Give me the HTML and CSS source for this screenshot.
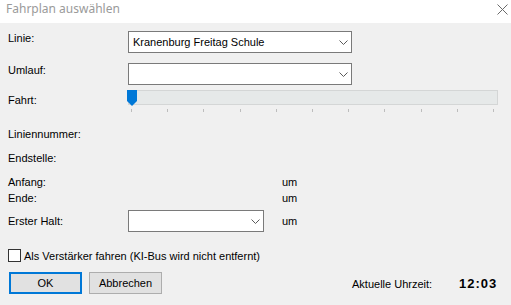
FILE: index.html
```html
<!DOCTYPE html>
<html lang="de">
<head>
<meta charset="utf-8">
<title>Fahrplan auswählen</title>
<link rel="stylesheet" href="styles.css">
</head>
<body>
<div class="window">
  <div class="titlebar">
    <span class="title">Fahrplan auswählen</span>
    <svg class="close" width="11" height="11" viewBox="0 0 11 11"><path d="M0.5 0.5 L10.5 10.5 M10.5 0.5 L0.5 10.5" stroke="#6a6a6a" stroke-width="1" fill="none"/></svg>
  </div>
  <div class="content">
    <div class="row row-linie">
      <span class="label">Linie:</span>
      <div class="combo combo-wide">
        <span class="combo-text">Kranenburg Freitag Schule</span>
        <svg class="chev" width="9" height="5" viewBox="0 0 9 5"><path d="M0.5 0.5 L4.5 4.5 L8.5 0.5" stroke="#5a5a5a" stroke-width="1" fill="none"/></svg>
      </div>
    </div>
    <div class="row row-umlauf">
      <span class="label">Umlauf:</span>
      <div class="combo combo-wide">
        <span class="combo-text"></span>
        <svg class="chev" width="9" height="5" viewBox="0 0 9 5"><path d="M0.5 0.5 L4.5 4.5 L8.5 0.5" stroke="#5a5a5a" stroke-width="1" fill="none"/></svg>
      </div>
    </div>
    <div class="row row-fahrt">
      <span class="label label-fahrt">Fahrt:</span>
      <div class="slider">
        <div class="track"></div>
        <svg class="thumb" width="10" height="17" viewBox="0 0 10 17"><path d="M0 0 H10 V11 L5 16 L0 11 Z" fill="#0078d7"/></svg>
        <div class="ticks">
          <i></i><i></i><i></i><i></i><i></i><i></i><i></i><i></i><i></i><i></i><i></i>
        </div>
      </div>
    </div>
    <div class="line line-nummer"><span class="label">Liniennummer:</span></div>
    <div class="line line-endstelle"><span class="label">Endstelle:</span></div>
    <div class="line line-anfang"><span class="label">Anfang:</span><span class="um um-text">um</span></div>
    <div class="line line-ende"><span class="label">Ende:</span><span class="um um-text">um</span></div>
    <div class="row row-halt">
      <span class="label label-halt">Erster Halt:</span>
      <div class="combo combo-small">
        <span class="combo-text"></span>
        <svg class="chev" width="9" height="5" viewBox="0 0 9 5"><path d="M0.5 0.5 L4.5 4.5 L8.5 0.5" stroke="#5a5a5a" stroke-width="1" fill="none"/></svg>
      </div>
      <span class="um-halt">um</span>
    </div>
    <label class="check-row">
      <span class="checkbox"></span>
      <span class="check-label">Als Verstärker fahren (KI-Bus wird nicht entfernt)</span>
    </label>
    <div class="button-row">
      <button class="btn btn-ok">OK</button>
      <button class="btn btn-cancel">Abbrechen</button>
      <span class="time-label">Aktuelle Uhrzeit:</span>
      <span class="time-value">12:03</span>
    </div>
  </div>
</div>
</body>
</html>
```

FILE: styles.css
```css
* { box-sizing: border-box; }
html, body {
  margin: 0;
  padding: 0;
  background: #f0f0f0;
}
body {
  width: 511px;
  height: 305px;
  overflow: hidden;
  font-family: "Liberation Sans", Arial, sans-serif;
  font-size: 11px;
  line-height: 13px;
  color: #000;
}
.window {
  width: 511px;
  height: 305px;
  display: flex;
  flex-direction: column;
}
.titlebar {
  height: 23px;
  background: #fff;
  display: flex;
  align-items: flex-start;
  justify-content: space-between;
  padding: 1px 3px 0 6px;
}
.title {
  font-family: "Noto Sans", "Open Sans", sans-serif;
  font-size: 12px;
  line-height: 16px;
  color: #9a9a9a;
}
.close {
  margin-top: 3px;
}
.content {
  padding-left: 8px;
  display: flex;
  flex-direction: column;
  align-items: flex-start;
}
.row {
  display: flex;
  align-items: flex-start;
}
.label {
  width: 120px;
  flex: none;
  white-space: nowrap;
}
.row-linie { margin-top: 8px; height: 22px; }
.row-linie .label,
.row-umlauf .label { padding-top: 1px; }
.row-umlauf { margin-top: 10px; height: 22px; }
.combo {
  height: 22px;
  background: #fff;
  border: 1px solid #7a7a7a;
  display: flex;
  align-items: center;
  justify-content: space-between;
  padding: 0 3px 0 4px;
}
.combo-wide { width: 224px; }
.combo-small { width: 136px; }
.combo-text { white-space: nowrap; padding-top: 1px; }
.chev { flex: none; margin-top: 1px; }
.row-fahrt { margin-top: 5px; height: 23px; }
.label-fahrt { padding-top: 4px; }
.slider {
  position: relative;
  width: 370px;
  height: 23px;
}
.track {
  height: 15px;
  background: #e6e9e9;
  border: 1px solid #d4d6d6;
}
.thumb {
  position: absolute;
  left: -1px;
  top: 0;
}
.ticks {
  margin-top: 4px;
  margin-left: 3px;
  width: 363px;
  height: 3px;
  display: flex;
  justify-content: space-between;
}
.ticks i {
  display: block;
  width: 1px;
  height: 3px;
  background: #bdbdbd;
}
.line {
  display: flex;
  height: 13px;
}
.line-nummer { margin-top: 15px; }
.line-endstelle { margin-top: 11px; }
.line-anfang { margin-top: 11px; }
.line-ende { margin-top: 3px; }
.um { margin-left: 154px; }
.row-halt { margin-top: 5px; height: 22px; }
.label-halt { padding-top: 5px; }
.um-halt { margin-left: 18px; padding-top: 5px; }
.check-row {
  margin-top: 17px;
  display: flex;
  align-items: flex-start;
  height: 13px;
}
.checkbox {
  width: 13px;
  height: 13px;
  border: 1px solid #333;
  background: #fff;
  flex: none;
}
.check-label {
  margin-left: 3px;
  white-space: nowrap;
  line-height: 13px;
  padding-top: 1px;
}
.button-row {
  margin-top: 10px;
  display: flex;
  align-items: center;
  height: 22px;
}
.btn {
  font-family: "Liberation Sans", Arial, sans-serif;
  font-size: 11px;
  line-height: 13px;
  color: #000;
  width: 73px;
  height: 22px;
  background: #e1e1e1;
  padding: 1px 0 0;
  margin: 0;
  text-align: center;
}
.btn-ok {
  margin-left: 1px;
  border: 2px solid #0078d7;
}
.btn-cancel {
  margin-left: 7px;
  border: 1px solid #adadad;
}
.time-label {
  margin-left: 190px;
  width: 107px;
  padding-top: 2px;
}
.time-value {
  font-weight: bold;
  font-size: 13px;
  letter-spacing: 1px;
  padding-top: 1px;
}
```
